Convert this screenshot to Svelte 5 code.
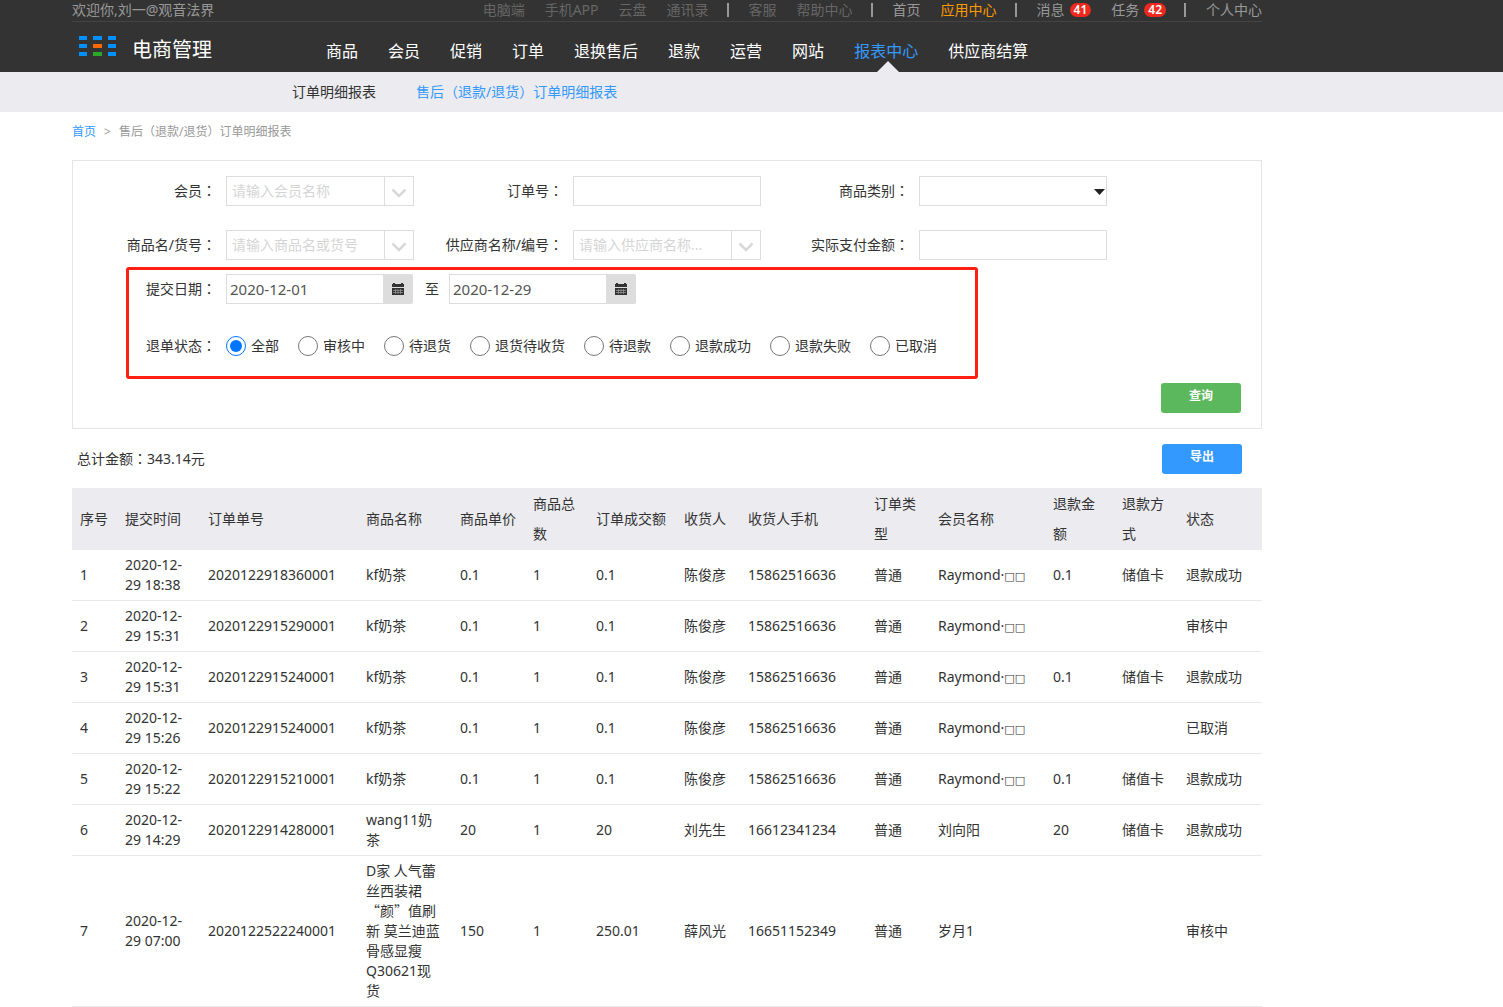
<script>
  /*
    After-sale order report: top bar, main nav, filter panel, results table.
  */
  const topLinks = [
    { text: "电脑端", tone: "dim" },
    { text: "手机APP", tone: "dim" },
    { text: "云盘", tone: "dim" },
    { text: "通讯录", tone: "dim" },
    { sep: true },
    { text: "客服", tone: "dim" },
    { text: "帮助中心", tone: "dim" },
    { sep: true },
    { text: "首页" },
    { text: "应用中心", tone: "hot" },
    { sep: true },
    { text: "消息", count: 41 },
    { text: "任务", count: 42 },
    { sep: true },
    { text: "个人中心" },
  ];

  const nav = ["商品", "会员", "促销", "订单", "退换售后", "退款", "运营", "网站", "报表中心", "供应商结算"];
  const activeNav = "报表中心";

  const fields = [
    { id: "member", label: "会员", kind: "combo", hint: "请输入会员名称" },
    { id: "order-no", label: "订单号", kind: "text" },
    { id: "category", label: "商品类别", kind: "select" },
    { id: "goods", label: "商品名/货号", kind: "combo", hint: "请输入商品名或货号" },
    { id: "supplier", label: "供应商名称/编号", kind: "combo", hint: "请输入供应商名称..." },
    { id: "paid", label: "实际支付金额", kind: "text" },
  ];

  const statuses = ["全部", "审核中", "待退货", "退货待收货", "待退款", "退款成功", "退款失败", "已取消"];

  let status = $state("全部");
  let dateFrom = $state("2020-12-01");
  let dateTo = $state("2020-12-29");

  const columns = [
    ["序号", 45],
    ["提交时间", 83],
    ["订单单号", 158],
    ["商品名称", 94],
    ["商品单价", 73],
    ["商品总数", 63],
    ["订单成交额", 88],
    ["收货人", 64],
    ["收货人手机", 126],
    ["订单类型", 64],
    ["会员名称", 115],
    ["退款金额", 69],
    ["退款方式", 64],
    ["状态", 84],
  ];

  const rows = [
    ["1", "2020-12-29 18:38", "2020122918360001", "kf奶茶", "0.1", "1", "0.1", "陈俊彦", "15862516636", "普通", "Raymond·□□", "0.1", "储值卡", "退款成功"],
    ["2", "2020-12-29 15:31", "2020122915290001", "kf奶茶", "0.1", "1", "0.1", "陈俊彦", "15862516636", "普通", "Raymond·□□", "", "", "审核中"],
    ["3", "2020-12-29 15:31", "2020122915240001", "kf奶茶", "0.1", "1", "0.1", "陈俊彦", "15862516636", "普通", "Raymond·□□", "0.1", "储值卡", "退款成功"],
    ["4", "2020-12-29 15:26", "2020122915240001", "kf奶茶", "0.1", "1", "0.1", "陈俊彦", "15862516636", "普通", "Raymond·□□", "", "", "已取消"],
    ["5", "2020-12-29 15:22", "2020122915210001", "kf奶茶", "0.1", "1", "0.1", "陈俊彦", "15862516636", "普通", "Raymond·□□", "0.1", "储值卡", "退款成功"],
    ["6", "2020-12-29 14:29", "2020122914280001", "wang11奶茶", "20", "1", "20", "刘先生", "16612341234", "普通", "刘向阳", "20", "储值卡", "退款成功"],
    ["7", "2020-12-29 07:00", "2020122522240001", "D家 人气蕾丝西装裙“颜”值刷新 莫兰迪蓝骨感显瘦Q30621现货", "150", "1", "250.01", "薛风光", "16651152349", "普通", "岁月1", "", "", "审核中"],
  ];

  // quotes are set full width, missing glyph boxes small
  function pieces(text) {
    return text.split(/([“”]|□+)/).filter(Boolean);
  }
</script>

{#snippet colon()}<span class="colon" lang="zh-TW">：</span>{/snippet}

{#snippet dateField(id, label, get, set)}
  <div class="date">
    <input {id} type="text" aria-label={label} value={get()} oninput={(e) => set(e.target.value)} />
    <button type="button" aria-label={label}>
      <svg width="12" height="12" viewBox="0 0 12 12">
        <path d="M1 0h2v1h6V0h2v1h1v3H0V1h1z" fill="#333" />
        <path d="M0 5h12v7H0z" fill="#333" />
        <path d="M1 7.500h10M1 9.500h10M3.500 6v5M6 6v5M8.500 6v5" stroke="#aaa" stroke-width="0.6" />
      </svg>
    </button>
  </div>
{/snippet}

<div class="page" lang="zh-CN">
  <header>
    <div class="wrap">
      <div class="topbar">
        <span>欢迎你,刘一@观音法界</span>
        <div class="toplinks">
          {#each topLinks as link}
            {#if link.sep}
              <i class="sep"></i>
            {:else}
              <a href="#top" class={link.tone}>{link.text}{#if link.count}<b>{link.count}</b>{/if}</a>
            {/if}
          {/each}
        </div>
      </div>
      <div class="mainbar">
        <a class="logo" href="#home">
          <svg width="38" height="20" viewBox="0 0 38 20">
            <g fill="#0090ff">
              <rect x="0" y="0" width="8" height="4" />
              <rect x="14" y="0" width="9" height="4" />
              <rect x="29" y="0" width="8" height="4" />
              <rect x="0" y="8" width="8" height="4" />
              <rect x="29" y="8" width="8" height="4" />
              <rect x="0" y="16" width="8" height="4" />
              <rect x="29" y="16" width="8" height="4" />
            </g>
            <rect x="14" y="8" width="9" height="4" fill="#ff6600" />
            <rect x="14" y="16" width="9" height="4" fill="#2aa82a" />
          </svg>
          <span>电商管理</span>
        </a>
        <nav>
          {#each nav as item}
            <a href="#nav" class:active={item === activeNav}>{item}</a>
          {/each}
        </nav>
      </div>
    </div>
  </header>

  <div class="subnav">
    <div class="wrap">
      <a href="#orders">订单明细报表</a>
      <a href="#after" class="active">售后<span class="paren" lang="zh-TW">（</span>退款/退货<span class="paren" lang="zh-TW">）</span>订单明细报表</a>
    </div>
  </div>

  <main class="wrap">
    <div class="crumbs">
      <a href="#home">首页</a><i>&gt;</i>售后<span class="paren" lang="zh-TW">（</span>退款/退货<span class="paren" lang="zh-TW">）</span>订单明细报表
    </div>

    <form class="panel" onsubmit={(e) => e.preventDefault()}>
      <div class="fields">
        {#each fields as f}
          <div class="field">
            <label for={f.id}>{f.label}{@render colon()}</label>
            {#if f.kind === "combo"}
              <div class="box">
                <input id={f.id} type="text" placeholder={f.hint} />
                <button type="button" aria-label={f.label}>
                  <svg width="16" height="10" viewBox="0 0 16 10">
                    <path d="M1.500 1.500L8 8l6.500-6.500" fill="none" stroke="#d8d8d8" stroke-width="2.500" />
                  </svg>
                </button>
              </div>
            {:else if f.kind === "select"}
              <div class="box">
                <select id={f.id}><option></option></select>
                <svg class="caret" width="11" height="6" viewBox="0 0 11 6">
                  <path d="M0 0h11L5.500 6z" fill="#222" />
                </svg>
              </div>
            {:else}
              <div class="box"><input id={f.id} type="text" /></div>
            {/if}
          </div>
        {/each}
      </div>

      <div class="marked">
        <div class="line">
          <label for="date-from">提交日期{@render colon()}</label>
          {@render dateField("date-from", "开始日期", () => dateFrom, (v) => (dateFrom = v))}
          <span class="to">至</span>
          {@render dateField("date-to", "结束日期", () => dateTo, (v) => (dateTo = v))}
        </div>
        <div class="line" role="radiogroup" aria-labelledby="status-label">
          <span class="label" id="status-label">退单状态{@render colon()}</span>
          <div class="radios">
            {#each statuses as s}
              <label><input type="radio" name="status" value={s} bind:group={status} />{s}</label>
            {/each}
          </div>
        </div>
      </div>

      <button class="btn btn--green" type="submit">查询</button>
    </form>

    <div class="summary">
      <span>总计金额{@render colon()}343.14元</span>
      <button class="btn btn--blue" type="button">导出</button>
    </div>

    <table>
      <colgroup>
        {#each columns as [, width]}
          <col style:width={`${width}px`} />
        {/each}
      </colgroup>
      <thead>
        <tr>
          {#each columns as [title]}
            <th>{title}</th>
          {/each}
        </tr>
      </thead>
      <tbody>
        {#each rows as row}
          <tr>
            {#each row as cell}
              <td>{#each pieces(cell) as p}{#if p === "“"}<wbr /><span class="wide">{p}</span>{:else if p === "”"}<span class="wide">{p}</span>{:else if p[0] === "□"}<span class="tofu">{p}</span>{:else}{p}{/if}{/each}</td>
            {/each}
          </tr>
        {/each}
      </tbody>
    </table>
  </main>
</div>

<style>
  :global(body) { background: #fff; }

  .page {
    font-family: "Noto Sans", "Noto Sans CJK SC", sans-serif;
    font-size: 14px;
    line-height: 20px;
    color: #333;
  }
  .page :global(*) { box-sizing: border-box; }
  a { color: inherit; text-decoration: none; }
  input, select, button { font: inherit; color: inherit; margin: 0; }
  .wrap { max-width: 1190px; margin: 0 72px; }
  .colon, .paren { font-family: "Noto Sans CJK TC", sans-serif; line-height: 14px; }

  header { background: #333; }
  .topbar {
    display: flex; justify-content: space-between; align-items: flex-start;
    height: 22px;
    border-bottom: 1px solid #444;
    color: #999;
  }
  .toplinks { display: flex; align-items: center; gap: 20px; }
  .toplinks a { display: flex; align-items: center; gap: 5px; }
  .toplinks .dim { color: #666; }
  .toplinks .hot { color: #f90; }
  .toplinks b {
    padding: 0 4px;
    border-radius: 7px;
    background: #f0281e;
    color: #fff;
    font-size: 12px; line-height: 14px; font-weight: 600;
  }
  .sep { width: 2px; height: 14px; margin-left: -2px; background: #999; }

  .mainbar { display: flex; height: 50px; }
  .logo {
    display: flex; align-items: flex-start; gap: 15px;
    flex: none;
    width: 254px;
    padding: 14px 0 0 7px;
    color: #fff;
    font-size: 20px; line-height: 28px;
  }
  nav { display: flex; gap: 30px; color: #fff; font-size: 16px; line-height: 58px; white-space: nowrap; }
  nav a { position: relative; }
  nav .active { color: #39f; }
  nav .active::after {
    content: "";
    position: absolute;
    left: 50%; bottom: 0;
    margin-left: -9px;
    border: 11px solid transparent;
    border-top: 0;
    border-bottom-color: #ebebf0;
  }

  .subnav { background: #ebebf0; line-height: 40px; }
  .subnav .wrap { display: flex; gap: 40px; padding-left: 220px; }
  .subnav .active { color: #39f; }

  .crumbs {
    margin-bottom: 8px;
    font-size: 12px; line-height: 40px;
    color: #999;
  }
  .crumbs a { color: #39f; }
  .crumbs i { margin: 0 8px; font-style: normal; }

  .panel {
    display: flex; flex-direction: column; align-items: flex-start;
    padding: 15px 0;
    border: 1px solid #e5e5e5;
  }
  .fields {
    display: grid;
    grid-template-columns: 341fr 347fr 346fr;
    row-gap: 24px;
    width: 100%;
    padding-right: 154px;
  }
  .field { display: flex; justify-content: flex-end; align-items: center; gap: 10px; }
  .field label { line-height: 30px; white-space: nowrap; }
  .box {
    position: relative;
    display: flex;
    flex: none;
    width: 188px; height: 30px;
    border: 1px solid #ddd;
  }
  .box input, .box select {
    flex: 1;
    min-width: 0;
    padding: 0 5px;
    border: 0;
    outline: 0;
    background: none;
    appearance: none;
  }
  .box input::placeholder { color: #d5d5d5; }
  .box button {
    display: flex; align-items: center; justify-content: center;
    width: 29px;
    padding: 3px 0 0;
    border: 0;
    border-left: 1px solid #ddd;
    background: none;
  }
  .caret { position: absolute; right: 1px; top: 12px; pointer-events: none; }

  .marked {
    display: flex; flex-direction: column; gap: 32px;
    margin: 7px 0 4px 53px;
    padding: 4px 38px 20px 0;
    border: 3px solid #ff2012;
    border-radius: 3px;
  }
  .line { display: flex; align-items: center; }
  .line > label, .label { width: 87px; margin-right: 10px; text-align: right; }
  .to { margin: 0 10px 0 12px; }
  .date { display: flex; height: 30px; }
  .date input {
    width: 157px;
    padding: 0 3px;
    border: 1px solid #ddd;
    border-right: 0;
    outline: 0;
    font-size: 15px;
    color: #555;
  }
  .date button {
    display: flex; align-items: center; justify-content: center;
    width: 30px;
    padding: 0;
    border: 0;
    border-radius: 0 2px 2px 0;
    background: #ddd;
  }
  .radios { display: flex; gap: 19px; }
  .radios label { display: flex; align-items: center; gap: 5px; }
  .radios input { width: 20px; height: 20px; }

  .btn {
    width: 80px; height: 30px;
    margin-right: 20px;
    padding: 0 0 4px;
    border: 0;
    border-radius: 3px;
    color: #fff;
    font-size: 12px; font-weight: 700;
  }
  .btn--green { align-self: flex-end; background: #5cb85c; }
  .btn--blue { background: #39f; }

  .summary {
    display: flex; justify-content: space-between; align-items: center;
    padding: 15px 0 14px 5px;
  }

  table { width: 100%; table-layout: fixed; border-collapse: separate; border-spacing: 0; }
  th, td { text-align: left; vertical-align: middle; font-weight: 400; }
  th { padding: 1px 8px; background: #ebebf0; line-height: 30px; }
  td { padding: 5px 8px; border-bottom: 1px solid #e8e8e8; }
  .wide { font-family: "Noto Sans CJK SC", sans-serif; line-height: 14px; }
  .tofu { font-family: "DejaVu Sans", sans-serif; font-size: 11px; line-height: 14px; }
</style>
